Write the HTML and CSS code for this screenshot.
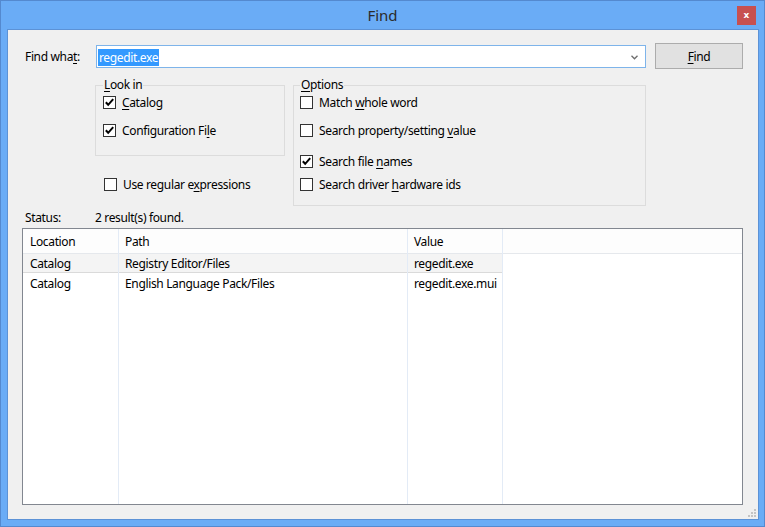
FILE: index.html
```html
<!DOCTYPE html>
<html>
<head>
<meta charset="utf-8">
<title>Find</title>
<link rel="stylesheet" href="styles.css">
</head>
<body>
<div class="window">
  <div class="titlebar">
    <div class="tb-side"></div>
    <div class="title">Find</div>
    <div class="tb-side tb-right"><div class="close">x</div></div>
  </div>
  <div class="client">
    <div class="toprow">
      <label class="findlbl">Find wha<u>t</u>:</label>
      <div class="combo">
        <span class="seltext">regedit.exe</span>
        <svg class="arrow" width="7" height="5" viewBox="0 0 7 5"><path d="M0.5 0.8 L3.5 3.8 L6.5 0.8" fill="none" stroke="#6d6d6d" stroke-width="1.3"/></svg>
      </div>
      <button class="btn"><u>F</u>ind</button>
    </div>
    <div class="mid">
      <div class="leftcol">
        <fieldset class="grp look">
          <legend><u>L</u>ook in</legend>
          <div class="chk r1"><span class="box"><svg width="11" height="11" viewBox="0 0 11 11"><path d="M1.8 5.2 L4.2 7.8 L9.2 2.2" fill="none" stroke="#000" stroke-width="2"/></svg></span><span><u>C</u>atalog</span></div>
          <div class="chk r2"><span class="box"><svg width="11" height="11" viewBox="0 0 11 11"><path d="M1.8 5.2 L4.2 7.8 L9.2 2.2" fill="none" stroke="#000" stroke-width="2"/></svg></span><span>Configuration Fi<u>l</u>e</span></div>
        </fieldset>
        <div class="chk regex"><span class="box"></span><span>Use regular e<u>x</u>pressions</span></div>
      </div>
      <fieldset class="grp opts">
        <legend><u>O</u>ptions</legend>
        <div class="chk r1"><span class="box"></span><span>Match <u>w</u>hole word</span></div>
        <div class="chk r2"><span class="box"></span><span>Search property/setting <u>v</u>alue</span></div>
        <div class="chk r3"><span class="box"><svg width="11" height="11" viewBox="0 0 11 11"><path d="M1.8 5.2 L4.2 7.8 L9.2 2.2" fill="none" stroke="#000" stroke-width="2"/></svg></span><span>Search file <u>n</u>ames</span></div>
        <div class="chk r4"><span class="box"></span><span>Search driver <u>h</u>ardware ids</span></div>
      </fieldset>
    </div>
    <div class="status"><span class="slbl">Status:</span><span>2 result(s) found.</span></div>
    <div class="list">
      <div class="col c1">
        <div class="hd">Location</div>
        <div class="cell hot">Catalog</div>
        <div class="cell">Catalog</div>
      </div>
      <div class="col c2">
        <div class="hd">Path</div>
        <div class="cell hot">Registry Editor/Files</div>
        <div class="cell">English Language Pack/Files</div>
      </div>
      <div class="col c3">
        <div class="hd">Value</div>
        <div class="cell hot">regedit.exe</div>
        <div class="cell">regedit.exe.mui</div>
      </div>
      <div class="col c4">
        <div class="hd"></div>
      </div>
    </div>
    <svg class="grip" width="8" height="8" viewBox="0 0 8 8">
      <rect x="6" y="0" width="2" height="2" fill="#c4c4c4"/>
      <rect x="3" y="3" width="2" height="2" fill="#c4c4c4"/>
      <rect x="6" y="3" width="2" height="2" fill="#c4c4c4"/>
      <rect x="0" y="6" width="2" height="2" fill="#c4c4c4"/>
      <rect x="3" y="6" width="2" height="2" fill="#c4c4c4"/>
      <rect x="6" y="6" width="2" height="2" fill="#c4c4c4"/>
    </svg>
  </div>
</div>
</body>
</html>
```

FILE: styles.css
```css
* { box-sizing: border-box; }
html, body { margin: 0; padding: 0; }
body {
  width: 765px;
  height: 527px;
  overflow: hidden;
  font-family: "Noto Sans", "Open Sans", sans-serif;
  font-size: 12px;
  letter-spacing: -0.35px;
  color: #000;
}
u { text-decoration: underline; text-underline-offset: 2px; }

.window {
  width: 765px;
  height: 527px;
  background: #6aacf6;
  border: 1px solid #5489cf;
  display: flex;
  flex-direction: column;
}
.titlebar {
  height: 28px;
  display: grid;
  grid-template-columns: 1fr auto 1fr;
  align-items: start;
}
.title {
  font-size: 15px;
  letter-spacing: 0;
  color: #2b2b2b;
  line-height: 28px;
  padding-top: 0;
}
.tb-right { display: flex; justify-content: flex-end; }
.close {
  width: 19px;
  height: 19px;
  margin-top: 5px;
  margin-right: 8px;
  background: #c75050;
  color: #fff;
  font-family: "DejaVu Sans", sans-serif;
  font-weight: bold;
  font-size: 9px;
  letter-spacing: 0;
  line-height: 18px;
  text-align: center;
}

.client {
  position: relative;
  flex: 1;
  margin: 0 5px 6px 6px;
  border: 1px solid #5c92d6;
  background: #f0f0f0;
  padding: 13px 15px 14px 14px;
  display: flex;
  flex-direction: column;
}

.toprow {
  display: flex;
  height: 26px;
  align-items: flex-start;
}
.findlbl {
  width: 74px;
  padding-left: 3px;
  line-height: 16px;
  margin-top: 6px;
}
.combo {
  width: 550px;
  height: 23px;
  margin-top: 2px;
  margin-right: 9px;
  background: #fff;
  border: 1px solid #7eb4ea;
  display: flex;
  align-items: center;
  padding-left: 1px;
  padding-right: 7px;
  padding-top: 1px;
}
.seltext {
  background: #3399ff;
  color: #fff;
  line-height: 17px;
  padding: 0 1px;
}
.arrow { margin-left: auto; margin-top: 0; }
.btn {
  width: 88px;
  height: 26px;
  border: 1px solid #acacac;
  background: #e1e1e1;
  font-family: inherit;
  font-size: 12px;
  letter-spacing: -0.35px;
  color: #000;
  padding: 1px 0 0 0;
  line-height: 22px;
}

.mid {
  display: flex;
  gap: 8px;
  margin-top: 8px;
  padding-left: 73px;
}
.leftcol { width: 190px; display: flex; flex-direction: column; }
.grp {
  margin: 0;
  border: 1px solid #dcdcdc;
  min-width: 0;
}
.grp legend {
  padding: 0 1px;
  line-height: 16px;
}
.look { padding: 1px 7px 17px 7px; }
.opts { width: 353px; height: 129px; padding: 1px 6px 13px 6px; }

.chk {
  display: flex;
  align-items: center;
  height: 16px;
  line-height: 16px;
  white-space: nowrap;
}
.chk > span:last-child { padding-top: 1px; }
.box {
  width: 13px;
  height: 13px;
  border: 1px solid #333;
  background: #fff;
  margin-right: 6px;
  flex: none;
  display: flex;
  align-items: center;
  justify-content: center;
}
.box svg { display: block; }
.r2 { margin-top: 12px; }
.opts .r3 { margin-top: 15px; }
.opts .r4 { margin-top: 7px; }
.regex { margin-top: 20px; margin-left: 9px; }

.status {
  display: flex;
  margin-top: 3px;
  line-height: 16px;
  padding-top: 1px;
  height: 16px;
}
.slbl { width: 73px; padding-left: 3px; }

.list {
  flex: 1;
  margin-top: 3px;
  border: 1px solid #828790;
  background: #fff;
  display: flex;
}
.col {
  display: flex;
  flex-direction: column;
  border-right: 1px solid #e3ebf6;
}
.c1 { width: 96px; }
.c2 { width: 289px; }
.c3 { width: 95px; }
.c4 { flex: 1; border-right: none; }
.hd {
  height: 25px;
  line-height: 24px;
  padding-top: 1px;
  border-bottom: 1px solid #e5e8ec;
  background: #fdfdfd;
  padding-left: 6px;
  white-space: nowrap;
}
.c1 .hd, .c1 .cell { padding-left: 7px; }
.cell {
  height: 20px;
  line-height: 20px;
  padding-top: 1px;
  padding-left: 6px;
  white-space: nowrap;
}
.cell.hot {
  height: 19px;
  line-height: 18px;
  background: #f4f4f4;
  border-bottom: 1px solid #dadada;
}

.grip {
  position: absolute;
  right: 2px;
  bottom: 2px;
}
```
